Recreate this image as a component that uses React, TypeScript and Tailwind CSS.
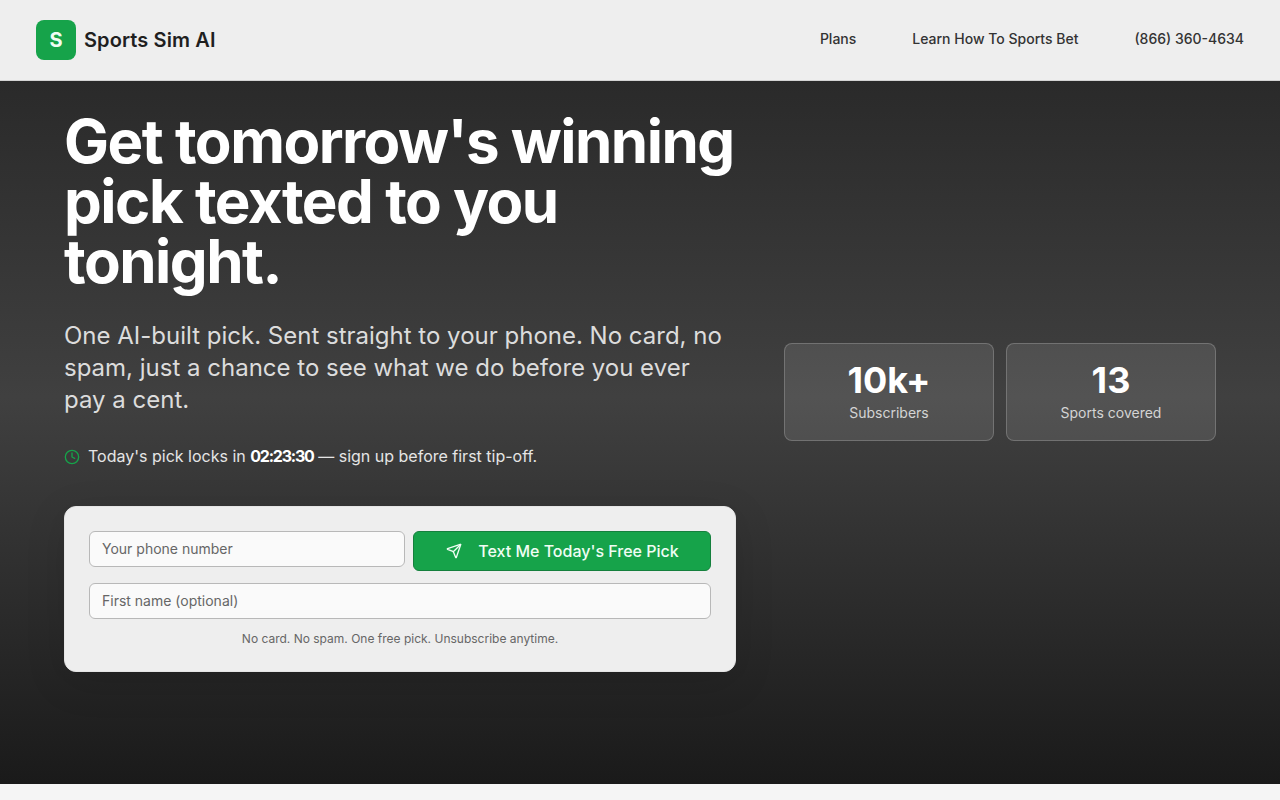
import { Clock, Send } from "lucide-react";

function Stat({ value, label }: { value: string; label: string }) {
  return (
    <div className="flex h-[98px] flex-col items-center rounded-lg border border-white/20 bg-white/10 pt-[13px]">
      <div className="text-[36px] leading-[46px] font-bold text-white">{value}</div>
      <div className="text-sm leading-5 text-[#d4d4d4]">{label}</div>
    </div>
  );
}

export default function App() {
  return (
    <div className="flex min-h-[800px] flex-col bg-[#f5f5f5] font-['Inter',sans-serif]">
      <header className="flex h-[81px] items-center justify-between border-b border-[#d4d4d4] bg-[#eeeeee] pr-9 pl-9">
        <div className="flex items-center gap-2">
          <div className="flex h-10 w-10 items-center justify-center rounded-lg bg-[#16a34a] text-xl font-bold text-[#f0fdf4]">S</div>
          <span className="text-xl font-semibold tracking-[0.1px] text-[#1f1f1f]">Sports Sim AI</span>
        </div>
        <nav className="flex items-center gap-14 pb-[2px] text-sm font-medium text-[#333333]">
          <span>Plans</span>
          <span>Learn How To Sports Bet</span>
          <span>(866) 360-4634</span>
        </nav>
      </header>
      <main className="h-[703px] bg-[linear-gradient(180deg,#2a2a2a_0%,#404040_45%,#1a1a1a_100%)] px-16 pt-[30px]">
        <div className="grid grid-cols-[672px_432px] items-center gap-12">
          <div>
            <h1 className="text-[60px] leading-[60px] font-bold tracking-[-1.5px] text-white">
              Get tomorrow's winning pick texted to you tonight.
            </h1>
            <p className="mt-[28.5px] text-2xl leading-8 text-[#dcdcdc]">
              One AI-built pick. Sent straight to your phone. No card, no spam, just a chance to see what we do before you ever pay a cent.
            </p>
            <div className="mt-[28.5px] flex items-center gap-2 text-base leading-6 text-[#e5e5e5]">
              <Clock className="mt-[1px] h-4 w-4 text-[#16a34a]" />
              <span>
                Today's pick locks in <strong className="font-bold tracking-[-1.2px] text-white">02:23:30</strong> — sign up before first tip-off.
              </span>
            </div>
            <form className="mt-[38px] rounded-xl border border-[#e5e5e5] bg-[#eeeeee] p-6 shadow-[0_10px_40px_rgba(0,0,0,0.12)]">
              <div className="flex items-start gap-2">
                <input
                  placeholder="Your phone number"
                  className="h-9 w-[316px] rounded-md border border-[#b8b8b8] bg-[#fafafa] px-3 pb-[2px] text-sm text-[#262626] outline-none placeholder:text-[#666666]"
                />
                <button
                  type="button"
                  className="flex h-10 w-[298px] items-center justify-center gap-4 rounded-md border border-[#15803d] bg-[#16a34a] text-base font-[450] text-[#f0fdf4]"
                >
                  <Send className="ml-[1px] h-4 w-4" />
                  <span>Text Me Today's Free Pick</span>
                </button>
              </div>
              <input
                placeholder="First name (optional)"
                className="mt-3 block h-9 w-full rounded-md border border-[#b8b8b8] bg-[#fafafa] px-3 pb-[2px] text-sm text-[#262626] outline-none placeholder:text-[#666666]"
              />
              <p className="mt-3 text-center text-xs leading-4 text-[#666666]">
                No card. No spam. One free pick. Unsubscribe anytime.
              </p>
            </form>
          </div>
          <div className="grid grid-cols-2 gap-3">
            <Stat value="10k+" label="Subscribers" />
            <Stat value="13" label="Sports covered" />
          </div>
        </div>
      </main>
      <div className="h-4 bg-[#f5f5f5]" />
    </div>
  );
}
